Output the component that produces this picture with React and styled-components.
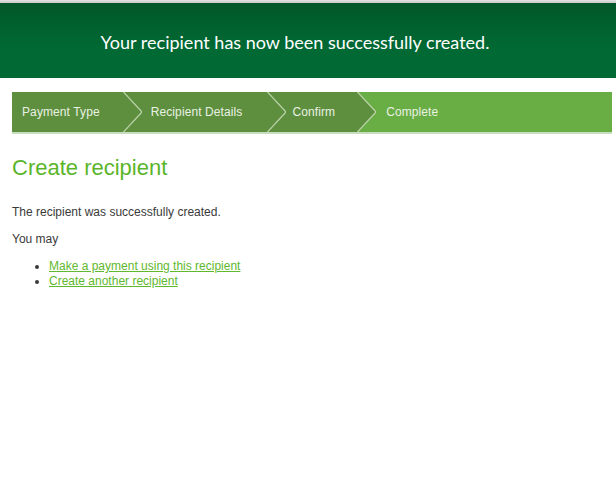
import React from 'react';
import styled, { createGlobalStyle } from 'styled-components';

const GlobalStyle = createGlobalStyle`
    body {
        margin: 0;
        background: #ffffff;
        font-family: "Liberation Sans", Arial, sans-serif;
    }
`;

const TopStrip = styled.div`
    height: 3px;
    background: linear-gradient(#e4e4e4, #c9c9c9);
`;

const Banner = styled.header`
    align-items: center;
    background: linear-gradient(#025729, #006934 60%, #006934);
    color: white;
    display: flex;
    height: 75px;
    justify-content: center;
    padding-right: 26px;
`;

const BannerText = styled.h1`
    font-family: Lato, "Open Sans", sans-serif;
    font-size: 18px;
    font-weight: 400;
    margin: 2px 0 0;
`;

const Steps = styled.nav`
    border-bottom: 2px solid #c8dcc0;
    display: flex;
    height: 40px;
    margin: 14px 4px 0 12px;
`;

const Step = styled.div`
    align-items: center;
    background: ${p => (p.$current ? '#69ad45' : '#5e8f3f')};
    color: #e9f1e2;
    display: flex;
    flex: ${p => (p.$current ? 1 : 'none')};
    font-size: 12px;
    letter-spacing: 0.1px;
    padding: 0 ${p => p.$pad}px 0 ${p => p.$lead}px;
`;

const Divider = ({ left, right }) => (
    <svg width="19" height="40" viewBox="0 0 19 40" style={{ display: 'block', flex: 'none' }}>
        <rect width="19" height="40" fill={right} />
        <polygon points="0,0 0.5,0 19,20 0.5,40 0,40" fill={left} />
        <polyline points="0.5,0 19,20 0.5,40" fill="none" stroke="#c9dcb8" strokeWidth="1.2" opacity="0.85" />
    </svg>
);

const Content = styled.main`
    color: #3a3a3a;
    font-size: 12px;
    padding: 0 12px;
`;

const Title = styled.h2`
    color: #5bb52b;
    font-size: 22px;
    font-weight: 400;
    margin: 21px 0 24px;
`;

const Paragraph = styled.p`
    line-height: 15px;
    margin: 0 0 12px;
`;

const Options = styled.ul`
    line-height: 15px;
    margin: 0;
    padding-left: 37px;
`;

const OptionLink = styled.a`
    color: #5fb82e;
    text-decoration: underline;
`;

const DARK = '#5e8f3f';
const LIGHT = '#69ad45';

const App = () => (
    <div>
        <GlobalStyle />
        <TopStrip />
        <Banner>
            <BannerText>Your recipient has now been successfully created.</BannerText>
        </Banner>
        <Steps>
            <Step $lead={10} $pad={23}>Payment Type</Step>
            <Divider left={DARK} right={DARK} />
            <Step $lead={9} $pad={25}>Recipient Details</Step>
            <Divider left={DARK} right={DARK} />
            <Step $lead={6} $pad={22}>Confirm</Step>
            <Divider left={DARK} right={LIGHT} />
            <Step $current $lead={10} $pad={10}>Complete</Step>
        </Steps>
        <Content>
            <Title>Create recipient</Title>
            <Paragraph>The recipient was successfully created.</Paragraph>
            <Paragraph>You may</Paragraph>
            <Options>
                <li><OptionLink href="#">Make a payment using this recipient</OptionLink></li>
                <li><OptionLink href="#">Create another recipient</OptionLink></li>
            </Options>
        </Content>
    </div>
);

export default App;
